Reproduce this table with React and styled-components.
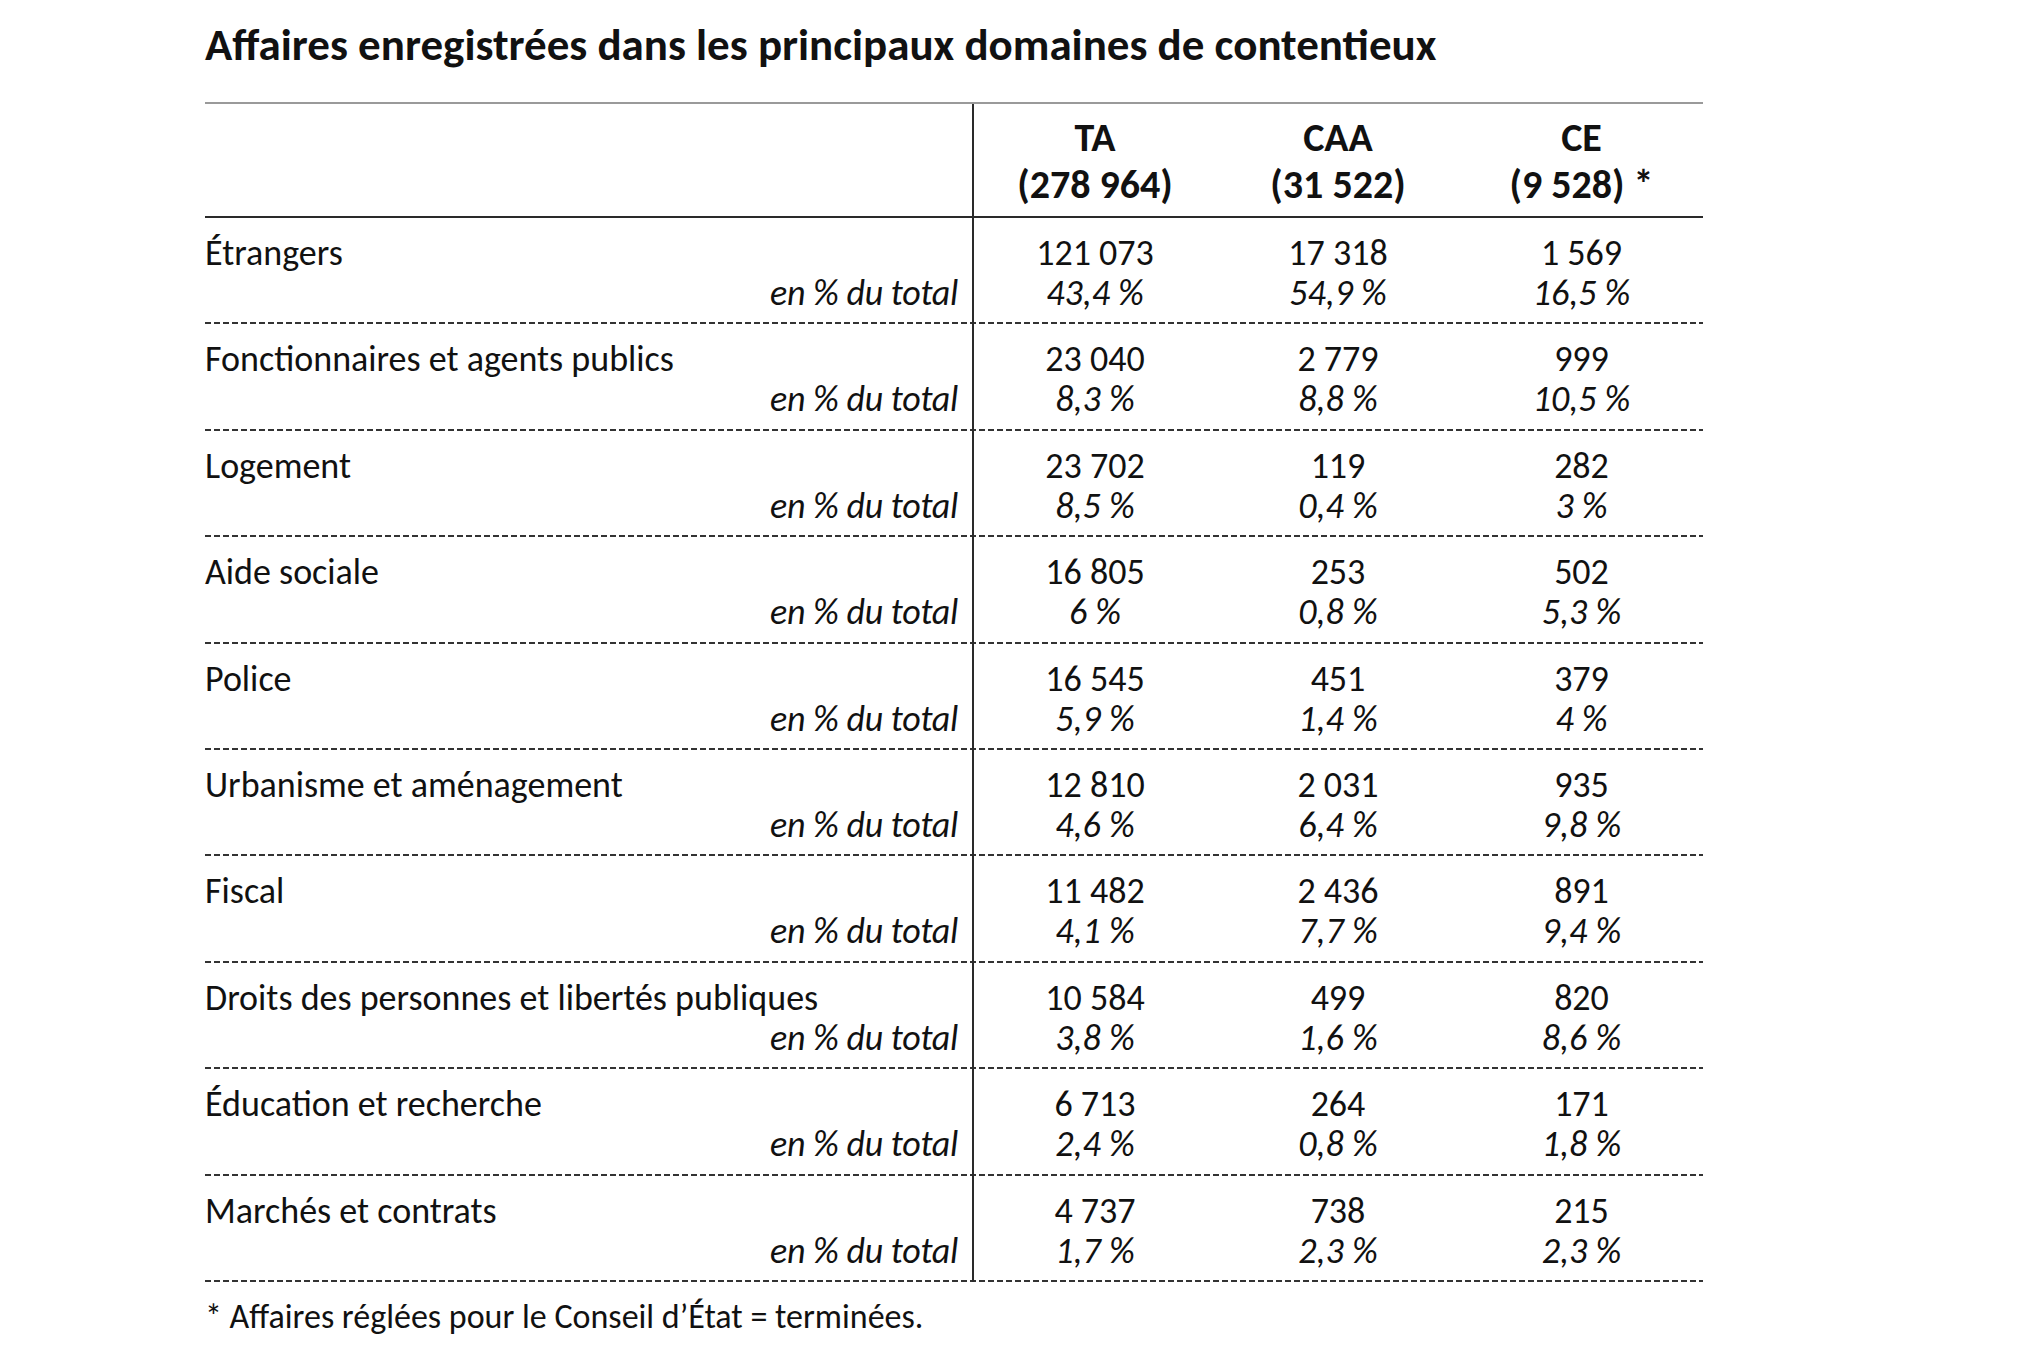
import React from 'react';
import styled, { createGlobalStyle } from 'styled-components';

const GlobalStyle = createGlobalStyle`
  html, body {
    margin: 0;
    padding: 0;
    background: #fff;
  }
  body {
    font-family: Carlito, Calibri, Lato, 'Open Sans', sans-serif;
    color: #111;
  }
`;

const Page = styled.div`
  padding: 19px 0 0 205px;
  width: 1498px;
`;

const Title = styled.h1`
  margin: 0 0 31px 0;
  font-size: 45px;
  line-height: 52px;
  font-weight: 700;
  color: #111;
`;

const Table = styled.div`
  border-top: 2px solid #9a9a9a;
`;

const Row = styled.div`
  display: grid;
  grid-template-columns: 767px 244px 244px 243px;
`;

const HeaderRow = styled(Row)`
  border-bottom: 2px solid #2a2a2a;
`;

const HeadCell = styled.div`
  padding: 10px 0 8px 0;
  font-size: 40px;
  line-height: 47px;
  font-weight: 700;
  text-align: center;
  border-left: ${(p) => (p.$divider ? '2px solid #2a2a2a' : 'none')};
`;

const Group = styled(Row)`
  background: repeating-linear-gradient(90deg, #333 0 6px, transparent 6px 9px) left bottom / 100% 2px no-repeat;
`;

const Cell = styled.div`
  display: flex;
  flex-direction: column;
  padding: 15px 0 11.4px 0;
  font-size: 36px;
  line-height: 40px;
  text-align: center;
  border-left: ${(p) => (p.$divider ? '2px solid #2a2a2a' : 'none')};
`;

const LabelCell = styled(Cell)`
  text-align: left;
  padding-right: 14px;
`;

const Share = styled.span`
  font-style: italic;
  text-align: ${(p) => (p.$right ? 'right' : 'center')};
  letter-spacing: ${(p) => (p.$right ? '-0.25px' : 'normal')};
`;

const Footnote = styled.p`
  margin: 13px 0 0 0;
  font-size: 34px;
  line-height: 44px;
`;

const rows = [
  ['Étrangers', ['121 073', '17 318', '1 569'], ['43,4 %', '54,9 %', '16,5 %']],
  ['Fonctionnaires et agents publics', ['23 040', '2 779', '999'], ['8,3 %', '8,8 %', '10,5 %']],
  ['Logement', ['23 702', '119', '282'], ['8,5 %', '0,4 %', '3 %']],
  ['Aide sociale', ['16 805', '253', '502'], ['6 %', '0,8 %', '5,3 %']],
  ['Police', ['16 545', '451', '379'], ['5,9 %', '1,4 %', '4 %']],
  ['Urbanisme et aménagement', ['12 810', '2 031', '935'], ['4,6 %', '6,4 %', '9,8 %']],
  ['Fiscal', ['11 482', '2 436', '891'], ['4,1 %', '7,7 %', '9,4 %']],
  ['Droits des personnes et libertés publiques', ['10 584', '499', '820'], ['3,8 %', '1,6 %', '8,6 %']],
  ['Éducation et recherche', ['6 713', '264', '171'], ['2,4 %', '0,8 %', '1,8 %']],
  ['Marchés et contrats', ['4 737', '738', '215'], ['1,7 %', '2,3 %', '2,3 %']],
];

const heads = [
  ['TA', '(278 964)'],
  ['CAA', '(31 522)'],
  ['CE', '(9 528) *'],
];

export default function App() {
  return (
    <>
      <GlobalStyle />
      <Page>
        <Title>Affaires enregistrées dans les principaux domaines de contentieux</Title>
        <Table>
          <HeaderRow>
            <HeadCell />
            {heads.map(([name, total], i) => (
              <HeadCell key={name} $divider={i === 0}>
                {name}
                <br />
                {total}
              </HeadCell>
            ))}
          </HeaderRow>
          {rows.map(([label, counts, shares]) => (
            <Group key={label}>
              <LabelCell>
                <span>{label}</span>
                <Share $right>en % du total</Share>
              </LabelCell>
              {counts.map((n, i) => (
                <Cell key={i} $divider={i === 0}>
                  <span>{n}</span>
                  <Share>{shares[i]}</Share>
                </Cell>
              ))}
            </Group>
          ))}
        </Table>
        <Footnote>* Affaires réglées pour le Conseil d’État = terminées.</Footnote>
      </Page>
    </>
  );
}
